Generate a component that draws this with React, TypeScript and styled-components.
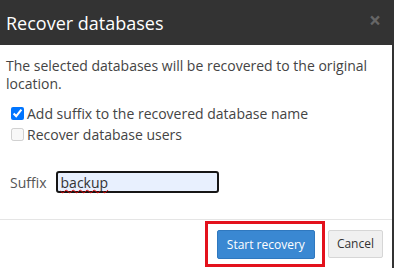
import React from "react";
import styled, { createGlobalStyle } from "styled-components";

const GlobalStyle = createGlobalStyle`
  html, body {
    margin: 0;
    padding: 0;
    background: #333333;
    font-family: "Open Sans", "Noto Sans", Arial, sans-serif;
  }
  * { box-sizing: border-box; }
`;

const Backdrop = styled.div`
  width: 394px;
  height: 268px;
  background: #333333;
  padding-right: 2px;
  overflow: hidden;
`;

const Dialog = styled.div`
  width: 392px;
  height: 268px;
  display: flex;
  flex-direction: column;
  background: #ffffff;
`;

const Header = styled.div`
  height: 45px;
  flex: 0 0 45px;
  background: #333333;
  display: flex;
  align-items: center;
  justify-content: space-between;
  padding: 0 10px 0 6px;
`;

const Title = styled.h4`
  margin: 0;
  font-size: 18px;
  line-height: 20px;
  font-weight: 400;
  color: #ffffff;
  margin-top: 1px;
`;

const Close = styled.span`
  font-size: 21px;
  font-weight: 700;
  line-height: 1;
  color: #666666;
  margin-top: -5px;
  margin-right: 1px;
`;

const Body = styled.div`
  padding: 12px 6px 26px 6px;
  color: #444444;
  font-size: 14px;
`;

const Para = styled.p`
  margin: 0;
  line-height: 18px;
`;

const CheckList = styled.div`
  margin-top: 10px;
  padding-left: 5px;
  display: flex;
  flex-direction: column;
`;

const CheckRow = styled.label`
  height: 21px;
  display: flex;
  align-items: center;
  gap: 3px;
  line-height: 18px;
`;

const Check = styled.input`
  width: 13px;
  height: 13px;
  margin: 0;
  accent-color: #0075ff;
`;

const SuffixRow = styled.div`
  margin-top: 26px;
  padding-left: 4px;
  height: 22px;
  display: flex;
  align-items: center;
  gap: 9px;
`;

const SuffixLabel = styled.span`
  color: #555555;
  line-height: 18px;
  margin-top: 1px;
`;

const InputWrap = styled.div`
  position: relative;
  width: 163px;
  height: 22px;
`;

const SuffixInput = styled.input`
  width: 163px;
  height: 22px;
  border: 2px solid #161616;
  border-radius: 3px;
  background: #e8f0fe;
  padding: 0 3px;
  font-family: "Open Sans", "Noto Sans", Arial, sans-serif;
  font-size: 14px;
  color: #333333;
  outline: none;
`;

const Squiggle = styled.span`
  position: absolute;
  left: 5px;
  top: 0;
  height: 22px;
  line-height: 22px;
  font-family: "Open Sans", "Noto Sans", Arial, sans-serif;
  font-size: 14px;
  color: transparent;
  pointer-events: none;
  text-decoration: underline wavy #e00000;
  text-decoration-thickness: 1px;
  text-underline-offset: 2px;
`;

const Footer = styled.div`
  flex: 1;
  border-top: 1px solid #e5e5e5;
  display: flex;
  justify-content: flex-end;
  align-items: flex-start;
  padding-right: 9px;
  gap: 3px;
`;

const Highlight = styled.div`
  margin-top: 1px;
  border: 3px solid #e3111c;
  padding: 6px 7px 5px 9px;
`;

const Button = styled.button<{ $primary?: boolean }>`
  height: ${(p) => (p.$primary ? "29px" : "28px")};
  padding: ${(p) => (p.$primary ? "0 9px" : "0 8px")};
  margin-top: ${(p) => (p.$primary ? "0" : "10px")};
  border-radius: 2px;
  border: 1px solid ${(p) => (p.$primary ? "#2f78bf" : "#d6d6d6")};
  background: ${(p) => (p.$primary ? "#3a88d2" : "#f0f0f0")};
  color: ${(p) => (p.$primary ? "#ffffff" : "#333333")};
  font-family: "Open Sans", "Noto Sans", Arial, sans-serif;
  font-size: 12px;
  line-height: 1;
  white-space: nowrap;
  cursor: pointer;
`;

export default function App() {
  return (
    <>
      <GlobalStyle />
      <Backdrop>
        <Dialog>
          <Header>
            <Title>Recover databases</Title>
            <Close>×</Close>
          </Header>
          <Body>
            <Para>
              The selected databases will be recovered to the original location.
            </Para>
            <CheckList>
              <CheckRow>
                <Check type="checkbox" defaultChecked />
                Add suffix to the recovered database name
              </CheckRow>
              <CheckRow>
                <Check type="checkbox" disabled />
                Recover database users
              </CheckRow>
            </CheckList>
            <SuffixRow>
              <SuffixLabel>Suffix</SuffixLabel>
              <InputWrap>
                <SuffixInput defaultValue="backup" spellCheck={false} />
                <Squiggle aria-hidden="true">backup</Squiggle>
              </InputWrap>
            </SuffixRow>
          </Body>
          <Footer>
            <Highlight>
              <Button $primary>Start recovery</Button>
            </Highlight>
            <Button>Cancel</Button>
          </Footer>
        </Dialog>
      </Backdrop>
    </>
  );
}
